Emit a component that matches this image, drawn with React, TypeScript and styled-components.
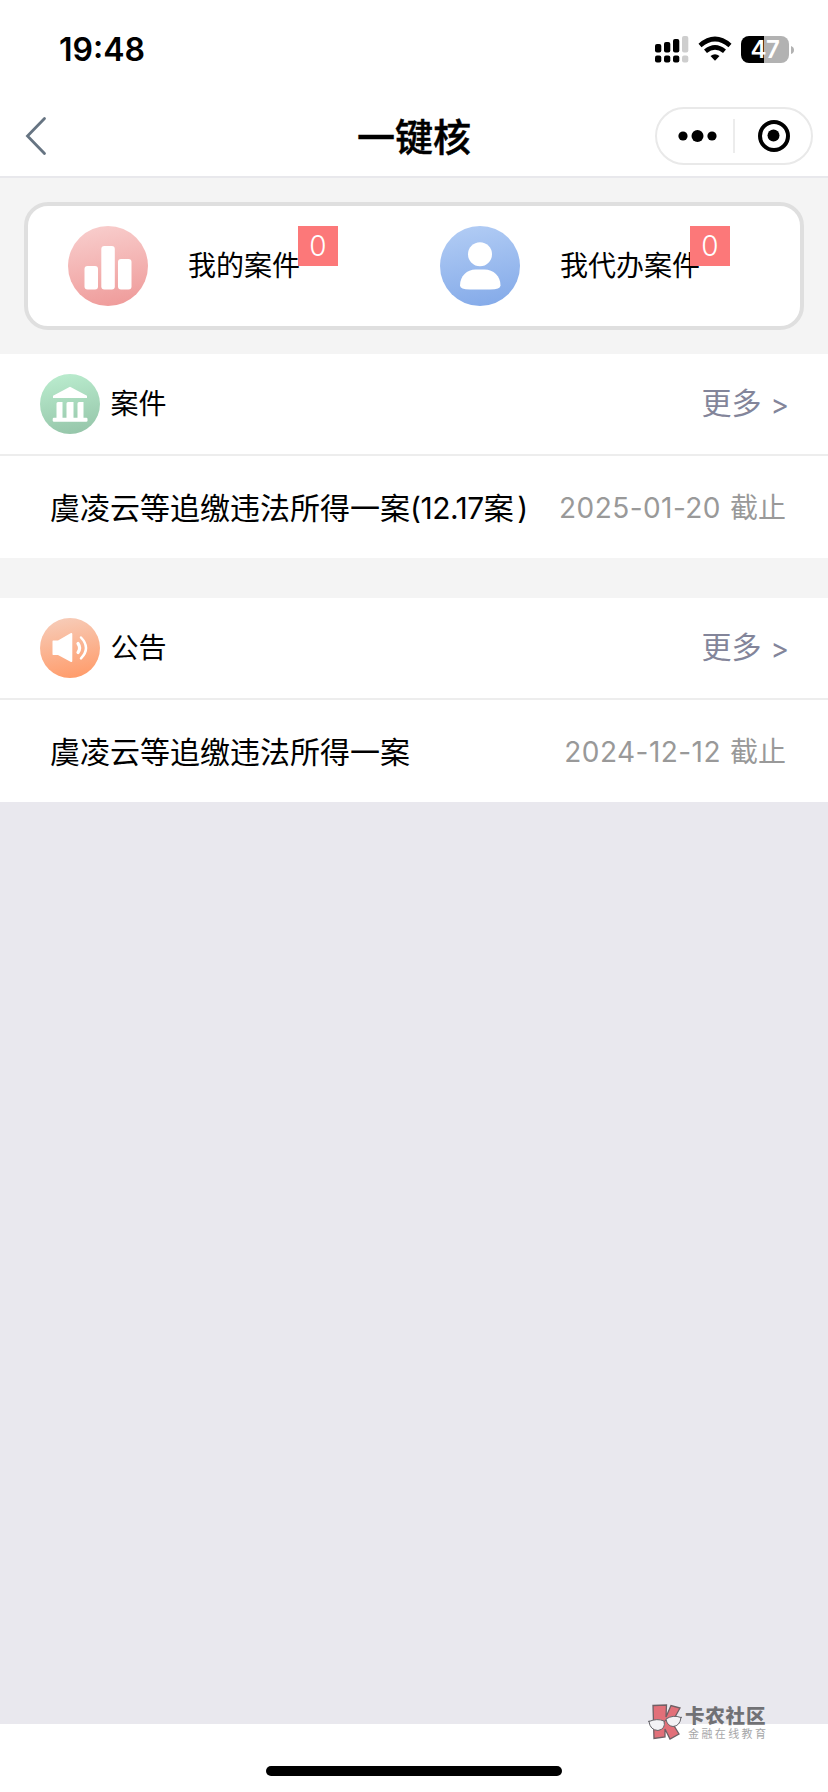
import React from "react";
import styled, { createGlobalStyle } from "styled-components";

const Global = createGlobalStyle`
  * { box-sizing: border-box; }
  body {
    margin: 0;
    background: #fff;
    font-family: Inter, "Noto Sans CJK SC", sans-serif;
    color: #000;
  }
  svg { display: block; flex: none; }
`;

const Screen = styled.div`
  position: relative;
  width: 828px;
  height: 1792px;
  display: flex;
  flex-direction: column;
  overflow: hidden;
  background: #fff;
`;

const StatusBar = styled.header`
  height: 96px;
  padding: 3px 32px 0 59px;
  display: flex;
  align-items: center;
  justify-content: space-between;
`;

const Clock = styled.span`
  font-size: 32px;
  font-weight: 600;
  line-height: 40px;
  padding-top: 1px;
`;

const StatusIcons = styled.div`
  display: flex;
  align-items: center;
`;

const Battery = styled.div`
  width: 48px;
  height: 27px;
  margin-left: 9px;
  border-radius: 8px;
  background: linear-gradient(90deg, #000 48%, #b2b2b2 48%);
  color: #fff;
  font-size: 24px;
  font-weight: 600;
  line-height: 27px;
  text-align: center;
  letter-spacing: -0.5px;
`;

const NavBar = styled.nav`
  height: 82px;
  padding: 0 15px 0 24px;
  border-bottom: 2px solid #e8e8ec;
  display: grid;
  grid-template-columns: 149px 1fr 158px;
  align-items: center;
`;

const Title = styled.h1`
  margin: 0;
  padding: 1px 0 0;
  font-size: 38px;
  font-weight: 500;
  line-height: 56px;
  text-align: center;
  -webkit-text-stroke: 0.5px #000;
`;

const Capsule = styled.div`
  height: 58px;
  width: 158px;
  border: 2px solid #e9e9e9;
  border-radius: 29px;
  display: grid;
  grid-template-columns: 78px 1fr;
  align-items: center;
  margin-bottom: 1px;
`;

const CapsuleButton = styled.div<{ $divided?: boolean }>`
  height: 34px;
  display: flex;
  align-items: center;
  justify-content: center;
  padding-left: ${(p) => (p.$divided ? "5px" : "1px")};
  border-right: ${(p) => (p.$divided ? "2px solid #ececec" : "none")};
`;

const SummaryArea = styled.section`
  padding: 24px;
  background: #f4f4f4;
`;

const SummaryCard = styled.div`
  height: 128px;
  border: 4px solid #dfdfdf;
  border-radius: 24px;
  background: #fff;
  display: grid;
  grid-template-columns: 372px 1fr;
  padding-left: 40px;
`;

const SummaryItem = styled.div`
  display: flex;
  align-items: center;
`;

const SummaryLabel = styled.span<{ $width: number }>`
  position: relative;
  width: ${(p) => p.$width}px;
  margin-left: 40px;
  font-size: 28px;
  line-height: 80px;
  white-space: nowrap;
  height: 80px;
`;

const CountBadge = styled.span`
  position: absolute;
  top: 0;
  left: 100%;
  width: 40px;
  height: 40px;
  background: #fc7879;
  color: #fff;
  font-size: 28px;
  font-weight: 300;
  line-height: 41px;
  text-align: center;
`;

const Section = styled.section`
  & + & { border-top: 40px solid #f4f4f4; }
`;

const SectionHeader = styled.div`
  height: 102px;
  padding: 0 39px 0 40px;
  border-bottom: 2px solid #ededed;
  display: flex;
  align-items: center;
`;

const SectionName = styled.h2`
  flex: 1;
  margin: 0 0 0 10.5px;
  font-size: 28px;
  font-weight: 400;
  line-height: 40px;
`;

const More = styled.a`
  display: flex;
  gap: 9px;
  color: #83859a;
  font-size: 30px;
  line-height: 40px;
  font-weight: 400;
`;

const Arrow = styled.span`
  font-size: 28px;
  padding-top: 2px;
`;

const Row = styled.div`
  height: 102px;
  padding: 1px 42px 0 50px;
  display: flex;
  align-items: center;
  justify-content: space-between;
  white-space: nowrap;
`;

const CaseName = styled.span`
  font-size: 30px;
  line-height: 40px;
`;

const CaseNumber = styled.span`
  letter-spacing: -0.5px;
`;

const ClosingParen = styled.span`
  margin-left: 4px;
`;

const Deadline = styled.span`
  display: flex;
  gap: 9px;
  color: #999;
  font-size: 28px;
  line-height: 40px;
`;

const DateText = styled.time`
  letter-spacing: 0.45px;
`;

const Filler = styled.main`
  height: 922px;
  background: #e9e8ee;
`;

const HomeArea = styled.footer`
  flex: 1;
  display: flex;
  justify-content: center;
  padding-top: 42px;
`;

const HomeIndicator = styled.div`
  width: 296px;
  height: 10px;
  border-radius: 5px;
  background: #000;
`;

const Watermark = styled.div`
  position: absolute;
  left: 647px;
  top: 1703px;
  display: flex;
  gap: 2px;
`;

const WatermarkText = styled.div`
  display: flex;
  flex-direction: column;
  padding-top: 2px;
`;

const WatermarkName = styled.span`
  height: 21px;
  font-size: 19.5px;
  font-weight: 900;
  line-height: 23px;
  letter-spacing: 0.8px;
  color: #717175;
`;

const WatermarkTagline = styled.span`
  padding-left: 3px;
  font-size: 11px;
  line-height: 14px;
  padding-top: 1px;
  letter-spacing: 2.4px;
  color: #a6a6a8;
`;

function Disc({ id, size, from, to, children }: { id: string; size: number; from: string; to: string; children: React.ReactNode }) {
  return (
    <svg width={size} height={size} viewBox={`0 0 ${size} ${size}`}>
      <defs>
        <linearGradient id={id} x1="0.4" y1="0" x2="0.6" y2="1">
          <stop offset="0" stopColor={from} />
          <stop offset="1" stopColor={to} />
        </linearGradient>
      </defs>
      <circle cx={size / 2} cy={size / 2} r={size / 2} fill={`url(#${id})`} />
      {children}
    </svg>
  );
}

const ChartIcon = () => (
  <Disc id="chart" size={80} from="#f8cccb" to="#ef9c9b">
    <g fill="#fff">
      <rect x="16.5" y="40" width="13.5" height="23.5" rx="3" />
      <rect x="33.3" y="20" width="13.5" height="43.5" rx="3" />
      <rect x="50" y="33" width="13.5" height="30.5" rx="3" />
    </g>
  </Disc>
);

const PersonIcon = () => (
  <Disc id="person" size={80} from="#b0cbf4" to="#85abe9">
    <g fill="#fff">
      <circle cx="40" cy="28.3" r="12" />
      <path d="M20 59.5C20 50 27 43.5 35.5 43.5h9C53.5 43.5 60.5 50 60.5 59.5Q60.5 63.5 50 63.5H30Q20 63.5 20 59.5Z" />
    </g>
  </Disc>
);

const CourtIcon = () => (
  <Disc id="court" size={60} from="#b9ebcd" to="#96c6aa">
    <g fill="#fff">
      <path d="M30 12.8 47 21.7V24H13V21.700Z" />
      <rect x="12.700" y="43.800" width="34.800" height="4" rx="1.200" />
      <path d="M16.500 44.500V29.500q0-1.500 1.500-1.500h4.500v16.500ZM26.500 44.500V29.500q0-1.500 1.500-1.500h5.500v16.500ZM37.500 44.500V29.500q0-1.500 1.500-1.500h4.500v16.500Z" />
    </g>
  </Disc>
);

const SpeakerIcon = () => (
  <Disc id="speaker" size={60} from="#f7cbb7" to="#ff9c6b">
    <path d="M13 22.5H18L30.5 15.2Q32.3 14.5 32.3 16V43Q32.3 44.5 30.5 43.8L18 37H13Q12.5 37 12.5 36V23.5Q12.5 22.5 13 22.5Z" fill="#fff" />
    <g fill="none" stroke="#fff" strokeLinecap="round">
      <path d="M38 25.500Q41.200 30 38 34.500" strokeWidth="3.200" />
      <path d="M41 19.500Q51 30 41 40.300" strokeWidth="2.500" />
    </g>
  </Disc>
);

const SignalIcon = () => (
  <svg width="34" height="27" viewBox="0 0 34 27">
    <rect x="0" y="8" width="6.3" height="8.5" rx="2" />
    <rect x="9" y="6" width="6.3" height="10.5" rx="2" />
    <rect x="18" y="3" width="6.3" height="13.5" rx="2" />
    <rect x="27" y="0" width="6.3" height="16.5" rx="2" fill="#cecece" />
    <rect x="0" y="19.5" width="6.3" height="7" rx="2" />
    <rect x="9" y="19.5" width="6.3" height="7" rx="2" />
    <rect x="18" y="19.5" width="6.3" height="7" rx="2" />
    <rect x="27" y="19.5" width="6.3" height="7" rx="2" fill="#cecece" />
  </svg>
);

const WifiGlyph = styled.svg`
  margin-left: 9px;
`;

const WifiIcon = () => (
  <WifiGlyph width="34" height="27" viewBox="0 0 34 27">
    <g fill="none" stroke="#000" strokeWidth="4.6">
      <path d="M2 9.5Q17-3.5 32 9.5" />
      <path d="M7.500 15.300Q17 7.500 26.500 15.300" />
    </g>
    <path d="M12.500 20Q17 16.500 21.500 20L17 24.800Z" />
  </WifiGlyph>
);

const BatteryTip = styled.svg`
  margin-left: 2px;
`;

const WatermarkLogo = () => (
  <svg width="36" height="38" viewBox="0 0 36 38">
    <path d="M6 2.5 19.5 2 19 14 24 2.5 33 5 25 19.5 32 31 23 36 18 26V34L7 35.5Z" fill="#e27079" stroke="#6f6065" strokeWidth="1.3" />
    <path d="M2 18.5Q10 15 17 18Q19 26 11 27.5Q3 27 2 18.5Z" fill="#f3f2f5" stroke="#66656a" />
    <path d="M19 16Q26 11.5 34 14.5Q33 23 26 23.5Q20 23 19 16Z" fill="#f3f2f5" stroke="#66656a" />
    <path d="M1 18.5 2.5 18M17 18.5 19 17M33.5 15 35 14" stroke="#66656a" fill="none" />
  </svg>
);

const sections = [
  { name: "案件", icon: <CourtIcon />, title: "虞凌云等追缴违法所得一案", number: "(12.17案", date: "2025-01-20" },
  { name: "公告", icon: <SpeakerIcon />, title: "虞凌云等追缴违法所得一案", number: "", date: "2024-12-12" },
];

export default function App() {
  return (
    <>
      <Global />
      <Screen>
        <StatusBar>
          <Clock>19:48</Clock>
          <StatusIcons>
            <SignalIcon />
            <WifiIcon />
            <Battery>47</Battery>
            <BatteryTip width="5" height="8" viewBox="0 0 5 8">
              <path d="M0 0Q3 1 3 4T0 8Z" fill="#b2b2b2" />
            </BatteryTip>
          </StatusIcons>
        </StatusBar>
        <NavBar>
          <svg width="24" height="40" viewBox="0 0 24 40">
            <path d="M20.5 2.5 3.5 20 20.5 37.5" fill="none" stroke="#667482" strokeWidth="2.8" strokeLinecap="round" />
          </svg>
          <Title>一键核</Title>
          <Capsule>
            <CapsuleButton $divided>
              <svg width="40" height="14" viewBox="0 0 40 14">
                <circle cx="5" cy="7" r="4.6" />
                <circle cx="19.5" cy="7" r="6" />
                <circle cx="34" cy="7" r="4.6" />
              </svg>
            </CapsuleButton>
            <CapsuleButton>
              <svg width="32" height="32" viewBox="0 0 32 32">
                <circle cx="16" cy="16" r="14" fill="none" stroke="#000" strokeWidth="4" />
                <circle cx="15.5" cy="15.5" r="6" />
              </svg>
            </CapsuleButton>
          </Capsule>
        </NavBar>
        <SummaryArea>
          <SummaryCard>
            <SummaryItem>
              <ChartIcon />
              <SummaryLabel $width={110}>我的案件<CountBadge>0</CountBadge></SummaryLabel>
            </SummaryItem>
            <SummaryItem>
              <PersonIcon />
              <SummaryLabel $width={130}>我代办案件<CountBadge>0</CountBadge></SummaryLabel>
            </SummaryItem>
          </SummaryCard>
        </SummaryArea>
        {sections.map((s) => (
          <Section key={s.name}>
            <SectionHeader>
              {s.icon}
              <SectionName>{s.name}</SectionName>
              <More><span>更多</span><Arrow>&gt;</Arrow></More>
            </SectionHeader>
            <Row>
              <CaseName>
                {s.title}
                {s.number && <><CaseNumber>{s.number}</CaseNumber><ClosingParen>)</ClosingParen></>}
              </CaseName>
              <Deadline><DateText>{s.date}</DateText><span>截止</span></Deadline>
            </Row>
          </Section>
        ))}
        <Filler />
        <HomeArea><HomeIndicator /></HomeArea>
        <Watermark>
          <WatermarkLogo />
          <WatermarkText>
            <WatermarkName>卡农社区</WatermarkName>
            <WatermarkTagline>金融在线教育</WatermarkTagline>
          </WatermarkText>
        </Watermark>
      </Screen>
    </>
  );
}
